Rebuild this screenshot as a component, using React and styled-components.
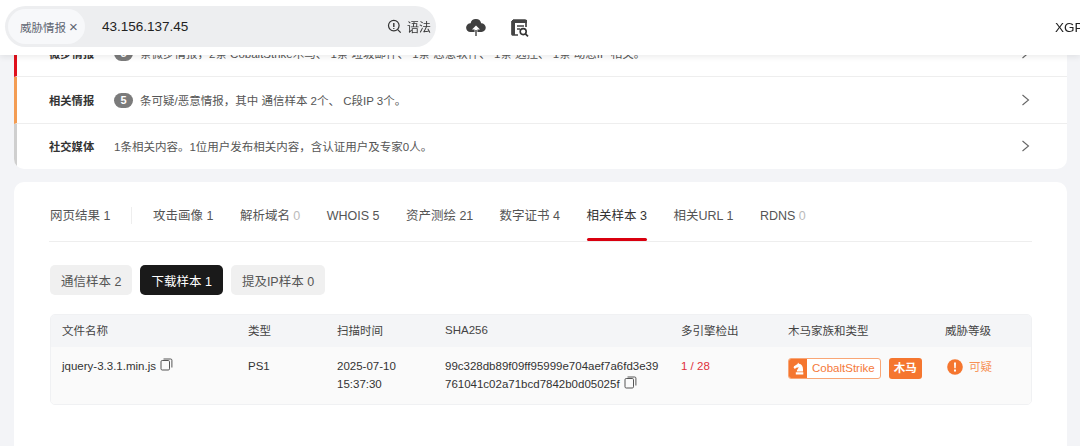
import React from "react";
import styled, { createGlobalStyle } from "styled-components";

const GlobalStyle = createGlobalStyle`
  html, body {
    margin: 0;
    height: 100%;
    overflow: hidden;
    background: #f3f4f7;
    font-family: "Liberation Sans", "Noto Sans CJK SC", sans-serif;
    color: #333;
  }
  * { box-sizing: border-box; }
`;

const Header = styled.header`
  position: fixed;
  top: 0;
  left: 0;
  right: 0;
  height: 55px;
  z-index: 10;
  display: flex;
  align-items: center;
  padding-left: 5px;
  background: #fff;
  box-shadow: 0 2px 6px rgba(0, 0, 0, 0.08);
`;

const SearchBar = styled.div`
  width: 431px;
  height: 41px;
  margin-top: -2px;
  display: flex;
  align-items: center;
  padding: 0 5px 0 3px;
  border-radius: 21px;
  background: #edeef0;
`;

const Chip = styled.div`
  width: 77px;
  height: 35px;
  display: flex;
  align-items: center;
  gap: 3px;
  padding-left: 12px;
  border-radius: 18px;
  background: #f7f8fa;
  font-size: 11.5px;
  color: #5d6470;
`;

const ChipClose = styled.span`
  font-size: 15px;
  font-weight: 400;
  line-height: 1;
`;

const SearchText = styled.span`
  margin-left: 17px;
  flex: 1;
  font-size: 13.5px;
  color: #222;
`;

const Syntax = styled.span`
  display: flex;
  align-items: center;
  gap: 5px;
  font-size: 12px;
  color: #333;
`;

const HeaderIcons = styled.div`
  display: flex;
  align-items: center;
  gap: 24px;
  margin-left: 30px;
`;

const User = styled.span`
  margin-left: auto;
  margin-right: -8px;
  width: 33px;
  font-size: 13.5px;
  color: #222;
  white-space: nowrap;
`;

const Page = styled.main`
  padding: 30px 13px 0 14px;
  display: flex;
  flex-direction: column;
  gap: 13px;
`;

const Card = styled.section`
  background: #fff;
  border-radius: 10px;
  overflow: hidden;
`;

const InfoRow = styled.div`
  height: ${(p) => p.$height}px;
  display: flex;
  align-items: center;
  padding: 0 37px ${(p) => (p.$last ? "1px" : "0")} 32px;
  border-left: 3px solid ${(p) => p.$bar};
  border-bottom: ${(p) => (p.$last ? "none" : "1px solid #eee")};
  font-size: 11.5px;
  color: #555;
`;

const RowTitle = styled.strong`
  width: 65px;
  font-size: 11.3px;
  font-weight: 700;
  color: #333;
`;

const CountBadge = styled.span`
  width: 19px;
  height: 15px;
  margin-right: 7px;
  border-radius: 8px;
  background: #7b7b7b;
  color: #fff;
  font-size: 11px;
  font-weight: 700;
  text-align: center;
  line-height: 15px;
`;

const RowText = styled.span`
  flex: 1;
  white-space: nowrap;
`;

const ResultCard = styled(Card)`
  height: 264px;
  padding: 0 35px;
  border-radius: 10px 10px 0 0;
`;

const TabBar = styled.nav`
  height: 60px;
  display: flex;
  align-items: flex-end;
  padding-left: 1px;
  border-bottom: 1px solid #eee;
`;

const Tab = styled.a`
  position: relative;
  height: 33px;
  margin-right: ${(p) => p.$gap}px;
  font-size: 12.5px;
  line-height: 16px;
  color: ${(p) => (p.$active ? "#333" : "#555")};
  white-space: nowrap;

  &::after {
    content: "";
    display: ${(p) => (p.$active ? "block" : "none")};
    position: absolute;
    left: 0;
    right: 0;
    bottom: 0;
    height: 3px;
    border-radius: 2px;
    background: #d9000f;
  }
`;

const Zero = styled.span`
  color: #bbb;
`;

const TabDivider = styled.i`
  width: 1px;
  height: 17px;
  margin: 25px 21px 0 0;
  align-self: flex-start;
  background: #eee;
`;

const SubTabs = styled.div`
  display: flex;
  gap: 8px;
  margin: 23px 0 19px 1px;
`;

const SubTab = styled.button`
  height: 30px;
  padding: 0 11px;
  border: none;
  border-radius: 5px;
  background: ${(p) => (p.$active ? "#1a1a1a" : "#f0f0f0")};
  color: ${(p) => (p.$active ? "#fff" : "#555")};
  font-family: inherit;
  font-size: 12.5px;
`;

const Table = styled.div`
  width: 982px;
  margin-left: 1px;
  border: 1px solid #f0f1f3;
  border-radius: 5px;
  overflow: hidden;
  font-size: 11.5px;
`;

const Grid = styled.div`
  display: grid;
  grid-template-columns: 186px 89px 108px 236px 107px 157px 1fr;
  padding-left: 11px;
`;

const HeadRow = styled(Grid)`
  height: 32px;
  padding-bottom: 3px;
  align-items: center;
  background: #f4f5f7;
  color: #444;
`;

const BodyRow = styled(Grid)`
  height: 57px;
  padding-top: 10px;
  background: #fafafa;
  line-height: 18px;
  color: #333;
`;

const Cell = styled.div`
  display: flex;
  flex-wrap: wrap;
  align-items: flex-start;
  align-content: flex-start;
`;

const Detect = styled.span`
  color: #e0303a;
`;

const Family = styled.div`
  display: flex;
  align-items: flex-start;
  align-self: start;
  gap: 8px;
  margin-top: 1px;
`;

const FamilyTag = styled.span`
  display: flex;
  align-items: stretch;
  height: 21px;
  border: 1px solid #f9a676;
  border-radius: 3px;
  overflow: hidden;
  background: #fff;
  color: #f5793a;
  font-size: 11.5px;
  line-height: 19px;
`;

const KnightBox = styled.span`
  width: 18px;
  display: flex;
  align-items: center;
  justify-content: center;
  background: #f5762f;
`;

const FamilyName = styled.span`
  padding: 0 5px;
`;

const TypeTag = styled.span`
  height: 21px;
  padding: 0 5px;
  border-radius: 3px;
  background: #f5762f;
  color: #fff;
  font-size: 11.5px;
  font-weight: 700;
  line-height: 21px;
`;

const Level = styled.div`
  display: flex;
  align-items: center;
  align-self: start;
  gap: 6px;
  margin: 1px 0 0 2px;
  font-size: 11.5px;
  color: #f79155;
`;

const CopyGlyph = styled.svg`
  margin-left: 4px;
  margin-top: 1px;
`;

const CopyIcon = () => (
  <CopyGlyph width="13" height="13" viewBox="0 0 13 13" fill="none" stroke="#555" strokeWidth="1">
    <rect x="1" y="2.5" width="8.5" height="9.5" rx="1.2" />
    <path d="M3.5 1h7.2a1.2 1.2 0 0 1 1.2 1.2v7.3" />
  </CopyGlyph>
);

const SyntaxIcon = () => (
  <svg width="15" height="15" viewBox="0 0 15 15" fill="none" stroke="#333" strokeWidth="1.2">
    <circle cx="6.8" cy="6.6" r="5.3" />
    <path d="M10.7 10.6l3 3" />
    <path d="M6.8 4v4" strokeWidth="1.4" />
    <path d="M6.8 9.1v.8" strokeWidth="1.2" />
  </svg>
);

const CloudIcon = () => (
  <svg width="20" height="19" viewBox="0 0 20 19">
    <path
      fill="#3f3f3f"
      d="M10 1a5.4 5.4 0 0 1 5.2 4.2A4.3 4.3 0 0 1 15.5 14H4.4A4.4 4.4 0 0 1 4.6 5.2 5.4 5.4 0 0 1 10 1z"
    />
    <path fill="#fff" d="M10 7.4l4 4.2h-2.6V16H8.6v-4.4H6z" />
    <path fill="#3f3f3f" d="M9.3 12h1.4v6H9.3z" />
  </svg>
);

const ReportIcon = () => (
  <svg width="20" height="20" viewBox="0 0 20 20" fill="none">
    <path stroke="#444" strokeWidth="1.7" d="M3 2h12a1 1 0 0 1 1 1v6M8 17H3a1 1 0 0 1-1-1V3" />
    <path fill="#444" d="M2 2h15v3H2zM2 5h3v12H2z" />
    <path stroke="#444" strokeWidth="1.4" d="M7 8h7M7 11h3" />
    <circle cx="13.2" cy="13.6" r="3" stroke="#333" strokeWidth="1.6" />
    <path stroke="#333" strokeWidth="1.7" d="M15.4 15.8l2.6 2.6" />
  </svg>
);

const Chevron = () => (
  <svg width="9" height="12" viewBox="0 0 9 12" fill="none" stroke="#666" strokeWidth="1.1">
    <path d="M1.5 1l6 5-6 5" />
  </svg>
);

const KnightIcon = () => (
  <svg width="11" height="13" viewBox="0 0 11 13">
    <path
      fill="#fff"
      d="M5 0.5l1 1.3c2.6.4 4 2.6 4 5.4v2.3H3.8c0-1.8 1.5-2.6 1.9-4.4-.9.7-1.8.8-2.6.6L2 7 .6 5.8 1 4.2 4.6 2zM2.8 10.3h7.5v2.2H2.8z"
    />
  </svg>
);

const WarnIcon = () => (
  <svg width="16" height="16" viewBox="0 0 16 16">
    <circle cx="8" cy="8" r="7.8" fill="#f5762f" />
    <path fill="#fff" d="M7 3.5h2l-.3 5.8H7.3zM7 10.4h2v2H7z" />
  </svg>
);

const tabs = [
  { label: "网页结果 1", gap: 20.5 },
  { divider: true },
  { label: "攻击画像 1", gap: 26.5 },
  { label: "解析域名", zero: true, gap: 26.3 },
  { label: "WHOIS 5", gap: 26.5 },
  { label: "资产测绘 21", gap: 26.3 },
  { label: "数字证书 4", gap: 26.5 },
  { label: "相关样本 3", gap: 26.5, active: true },
  { label: "相关URL 1", gap: 26.5 },
  { label: "RDNS", zero: true, gap: 0 },
];

const columns = ["文件名称", "类型", "扫描时间", "SHA256", "多引擎检出", "木马家族和类型", "威胁等级"];

export default function App() {
  return (
    <>
      <GlobalStyle />
      <Header>
        <SearchBar>
          <Chip>威胁情报<ChipClose>×</ChipClose></Chip>
          <SearchText>43.156.137.45</SearchText>
          <Syntax><SyntaxIcon />语法</Syntax>
        </SearchBar>
        <HeaderIcons>
          <CloudIcon />
          <ReportIcon />
        </HeaderIcons>
        <User>XGP</User>
      </Header>
      <Page>
        <Card>
          <InfoRow $height={47} $bar="#e0101c">
            <RowTitle>微步情报</RowTitle>
            <CountBadge>5</CountBadge>
            <RowText>条微步情报，2条 CobaltStrike木马、 1条 垃圾邮件、 1条 恶意软件、 1条 远控、 1条 动态IP 相关。</RowText>
            <Chevron />
          </InfoRow>
          <InfoRow $height={47} $bar="#f39c53">
            <RowTitle>相关情报</RowTitle>
            <CountBadge>5</CountBadge>
            <RowText>条可疑/恶意情报，其中 通信样本 2个、 C段IP 3个。</RowText>
            <Chevron />
          </InfoRow>
          <InfoRow $height={45} $bar="#cfcfcf" $last>
            <RowTitle>社交媒体</RowTitle>
            <RowText>1条相关内容。1位用户发布相关内容，含认证用户及专家0人。</RowText>
            <Chevron />
          </InfoRow>
        </Card>
        <ResultCard>
          <TabBar>
            {tabs.map((t, i) =>
              t.divider ? (
                <TabDivider key={i} />
              ) : (
                <Tab key={i} $gap={t.gap} $active={t.active}>
                  {t.label}
                  {t.zero && <Zero> 0</Zero>}
                </Tab>
              )
            )}
          </TabBar>
          <SubTabs>
            <SubTab>通信样本 2</SubTab>
            <SubTab $active>下载样本 1</SubTab>
            <SubTab>提及IP样本 0</SubTab>
          </SubTabs>
          <Table>
            <HeadRow>
              {columns.map((c) => (
                <div key={c}>{c}</div>
              ))}
            </HeadRow>
            <BodyRow>
              <Cell>jquery-3.3.1.min.js<CopyIcon /></Cell>
              <Cell>PS1</Cell>
              <Cell>2025-07-10<br />15:37:30</Cell>
              <Cell>
                99c328db89f09ff95999e704aef7a6fd3e39
                <span>761041c02a71bcd7842b0d05025f</span>
                <CopyIcon />
              </Cell>
              <Cell><Detect>1 / 28</Detect></Cell>
              <Family>
                <FamilyTag>
                  <KnightBox><KnightIcon /></KnightBox>
                  <FamilyName>CobaltStrike</FamilyName>
                </FamilyTag>
                <TypeTag>木马</TypeTag>
              </Family>
              <Level><WarnIcon />可疑</Level>
            </BodyRow>
          </Table>
        </ResultCard>
      </Page>
    </>
  );
}
